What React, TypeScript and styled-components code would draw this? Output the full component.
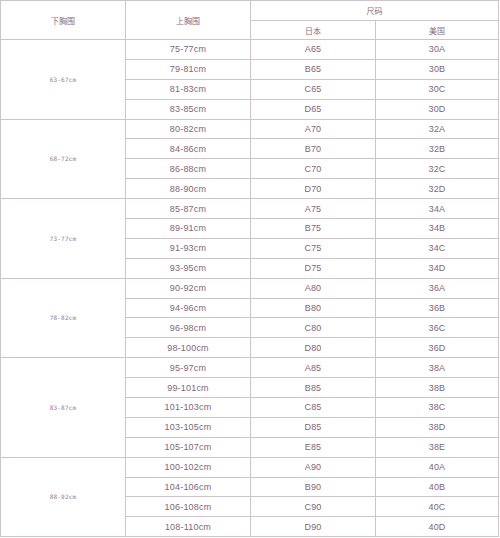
import React from "react";
import styled, { createGlobalStyle } from "styled-components";

const GlobalStyle = createGlobalStyle`
  html, body {
    margin: 0;
    padding: 0;
    background: #ffffff;
  }
  body {
    font-family: "Liberation Sans", "Noto Sans CJK SC", Arial, sans-serif;
  }
`;

const Grid = styled.div`
  display: grid;
  width: 499px;
  grid-template-columns: 124px 124px 124px 122px;
  grid-template-rows: 19px 18px repeat(25, 18.9px);
  gap: 1px;
  padding: 1px;
  box-sizing: border-box;
  background: #cfc4ca;
`;

const Cell = styled.div<{ $col?: string; $row?: string }>`
  background: #ffffff;
  display: flex;
  align-items: center;
  justify-content: center;
  color: #82657a;
  font-size: 9px;
  letter-spacing: 0.2px;
  grid-column: ${(p) => p.$col ?? "auto"};
  grid-row: ${(p) => p.$row ?? "auto"};
  white-space: nowrap;
`;

const HeadCell = styled(Cell)`
  font-size: 8px;
  letter-spacing: 0;
  color: #8a6c7e;
  font-family: "Noto Sans CJK SC", "Liberation Sans", sans-serif;
`;

const GroupCell = styled(Cell)`
  font-family: "DejaVu Sans Mono", "Liberation Mono", monospace;
  font-size: 6px;
  letter-spacing: 0.2px;
  color: #957a8b;
`;

interface Group {
  under: string;
  rows: [string, string, string][];
}

const groups: Group[] = [
  {
    under: "63-67cm",
    rows: [
      ["75-77cm", "A65", "30A"],
      ["79-81cm", "B65", "30B"],
      ["81-83cm", "C65", "30C"],
      ["83-85cm", "D65", "30D"],
    ],
  },
  {
    under: "68-72cm",
    rows: [
      ["80-82cm", "A70", "32A"],
      ["84-86cm", "B70", "32B"],
      ["86-88cm", "C70", "32C"],
      ["88-90cm", "D70", "32D"],
    ],
  },
  {
    under: "73-77cm",
    rows: [
      ["85-87cm", "A75", "34A"],
      ["89-91cm", "B75", "34B"],
      ["91-93cm", "C75", "34C"],
      ["93-95cm", "D75", "34D"],
    ],
  },
  {
    under: "78-82cm",
    rows: [
      ["90-92cm", "A80", "36A"],
      ["94-96cm", "B80", "36B"],
      ["96-98cm", "C80", "36C"],
      ["98-100cm", "D80", "36D"],
    ],
  },
  {
    under: "83-87cm",
    rows: [
      ["95-97cm", "A85", "38A"],
      ["99-101cm", "B85", "38B"],
      ["101-103cm", "C85", "38C"],
      ["103-105cm", "D85", "38D"],
      ["105-107cm", "E85", "38E"],
    ],
  },
  {
    under: "88-92cm",
    rows: [
      ["100-102cm", "A90", "40A"],
      ["104-106cm", "B90", "40B"],
      ["106-108cm", "C90", "40C"],
      ["108-110cm", "D90", "40D"],
    ],
  },
];

export default function App() {
  let rowStart = 3;
  const body: React.ReactNode[] = [];
  groups.forEach((g) => {
    body.push(
      <GroupCell
        key={g.under}
        $col="1"
        $row={`${rowStart} / span ${g.rows.length}`}
      >
        {g.under}
      </GroupCell>
    );
    g.rows.forEach((r, i) => {
      const row = `${rowStart + i}`;
      body.push(
        <Cell key={r[0]} $col="2" $row={row}>
          {r[0]}
        </Cell>,
        <Cell key={r[1]} $col="3" $row={row}>
          {r[1]}
        </Cell>,
        <Cell key={r[2]} $col="4" $row={row}>
          {r[2]}
        </Cell>
      );
    });
    rowStart += g.rows.length;
  });

  return (
    <>
      <GlobalStyle />
      <Grid>
        <HeadCell $col="1" $row="1 / span 2">下胸围</HeadCell>
        <HeadCell $col="2" $row="1 / span 2">上胸围</HeadCell>
        <HeadCell $col="3 / span 2" $row="1">尺码</HeadCell>
        <HeadCell $col="3" $row="2">日本</HeadCell>
        <HeadCell $col="4" $row="2">美国</HeadCell>
        {body}
      </Grid>
    </>
  );
}
